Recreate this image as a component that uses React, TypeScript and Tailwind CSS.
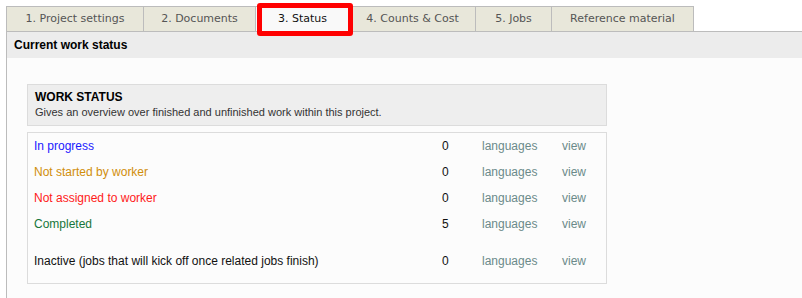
const TABS = [
  { label: "1. Project settings", w: "w-[138px]" },
  { label: "2. Documents", w: "w-[113px]" },
  { label: "3. Status", w: "w-[95px]", active: true },
  { label: "4. Counts & Cost", w: "w-[127px]" },
  { label: "5. Jobs", w: "w-[77px]" },
  { label: "Reference material", w: "w-[143px]" },
];

const ROWS = [
  { label: "In progress", color: "text-[#1a1aff]", count: 0 },
  { label: "Not started by worker", color: "text-[#d18e0b]", count: 0 },
  { label: "Not assigned to worker", color: "text-[#ff1a1a]", count: 0 },
  { label: "Completed", color: "text-[#17763a]", count: 5 },
];

export default function App() {
  return (
    <div className="h-[298px] w-[802px] overflow-hidden bg-white font-['Liberation_Sans',Arial,sans-serif]">
      <div className="relative flex pl-[6px] pt-[6px]">
        {TABS.map((t) => (
          <div
            key={t.label}
            className={`${t.w} -mr-px flex h-[25px] items-center justify-center border border-b-0 border-[#bcbcbc] font-['DejaVu_Sans',Verdana,sans-serif] text-[11px] ${
              t.active ? "bg-[#f9f9f9] text-[#111]" : "bg-[#e8e7da] text-[#555]"
            }`}
          >
            {t.label}
          </div>
        ))}
        <div className="pointer-events-none absolute left-[257px] top-[3px] h-[33px] w-[96px] rounded-[3px] border-[5px] border-[#ff0000]" />
      </div>
      <div className="ml-[6px] h-full border-l border-t border-[#bcbcbc] bg-[#fcfcfc]">
        <div className="flex h-[26px] items-center bg-[#ececec] pl-[7px] text-[12px] font-bold text-black">
          Current work status
        </div>
        <div className="pl-[20px] pt-[26px]">
          <div className="h-[42px] w-[580px] border border-[#dcdcdc] bg-[#eeeeee] pl-[7px] pt-[5px]">
            <div className="text-[12px] font-bold leading-[14px] text-black">WORK STATUS</div>
            <div className="mt-[2px] text-[11px] leading-[13px] text-[#333]">
              Gives an overview over finished and unfinished work within this project.
            </div>
          </div>
          <div className="mt-[6px] h-[152px] w-[580px] border border-[#dcdcdc] bg-[#fcfcfc] pl-[6px] text-[12px]">
            {ROWS.map((r) => (
              <Row key={r.label} label={r.label} color={r.color} count={r.count} />
            ))}
            <div className="h-[11px]" />
            <Row
              label="Inactive (jobs that will kick off once related jobs finish)"
              color="text-[#111]"
              count={0}
            />
          </div>
        </div>
      </div>
    </div>
  );
}

function Row({ label, color, count }: { label: string; color: string; count: number }) {
  return (
    <div className="flex h-[26px] items-center">
      <span className={`w-[408px] ${color}`}>{label}</span>
      <span className="w-[40px] text-[#111]">{count}</span>
      <span className="w-[80px] text-[#6b8a8a]">languages</span>
      <span className="text-[#6b8a8a]">view</span>
    </div>
  );
}
